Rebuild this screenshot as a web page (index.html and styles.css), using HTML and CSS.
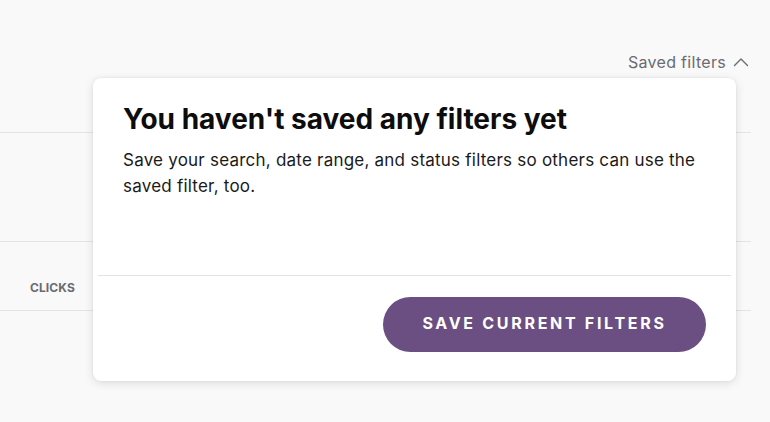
FILE: index.html
```html
<!DOCTYPE html>
<html>
<head>
<meta charset="utf-8">
<link rel="stylesheet" href="styles.css">
</head>
<body>
<div class="page">
  <div class="toolbar">
    <button class="saved-toggle">Saved filters
      <svg class="chevron" width="16" height="14" viewBox="0 0 16 14"><path d="M1.5 10.5 L8 4 L14.5 10.5" fill="none" stroke="#6b6b70" stroke-width="1.4" stroke-linecap="round" stroke-linejoin="round"/></svg>
    </button>
  </div>
  <div class="table">
    <div class="row row-b"></div>
    <div class="row row-head"><span class="col-head">CLICKS</span></div>
  </div>

  <div class="popover">
    <div class="popover-body">
      <h2 class="popover-title">You haven't saved any filters yet</h2>
      <p class="popover-text">Save your search, date range, and status filters so others can use the saved filter, too.</p>
    </div>
    <div class="popover-divider"></div>
    <div class="popover-footer">
      <button class="btn-primary">SAVE CURRENT FILTERS</button>
    </div>
  </div>
</div>
</body>
</html>
```

FILE: styles.css
```css
* { box-sizing: border-box; }
html, body { margin: 0; padding: 0; }
body {
  background: #f9f9f9;
  font-family: "Inter", "Lato", sans-serif;
  color: #111;
  width: 770px;
  height: 422px;
  overflow: hidden;
}
.page {
  position: relative;
  width: 770px;
  height: 422px;
}
.toolbar {
  width: 751px;
  height: 133px;
  display: flex;
  justify-content: flex-end;
  align-items: flex-start;
  padding-top: 50px;
  padding-right: 2px;
  border-bottom: 1px solid #e4e4e4;
}
.saved-toggle {
  background: none;
  border: none;
  padding: 0;
  font-family: inherit;
  font-size: 16px;
  letter-spacing: 0.3px;
  color: #6b6b70;
  display: flex;
  align-items: center;
  gap: 7px;
  line-height: 24px;
}
.table { width: 751px; }
.row { border-bottom: 1px solid #e4e4e4; }
.row-b { height: 109px; }
.row-head {
  height: 69px;
  display: flex;
  align-items: flex-end;
  padding-left: 30px;
  padding-bottom: 15px;
}
.col-head {
  font-size: 12px;
  font-weight: 700;
  color: #6b6b70;
  letter-spacing: 0.1px;
}
.popover {
  position: absolute;
  left: 93px;
  top: 78px;
  width: 643px;
  height: 303px;
  background: #fff;
  border-radius: 8px;
  box-shadow: 0 2px 10px rgba(0,0,0,0.12), 0 0 2px rgba(0,0,0,0.08);
  display: flex;
  flex-direction: column;
}
.popover-body {
  padding: 24px 30px 0 30px;
  flex: 1;
}
.popover-title {
  margin: 0;
  font-size: 28px;
  line-height: 34px;
  font-weight: 700;
  color: #0d0d0d;
  letter-spacing: 0;
}
.popover-text {
  margin: 11px 0 0 0;
  font-size: 17px;
  line-height: 26px;
  letter-spacing: 0.22px;
  color: #1a1a1a;
}
.popover-divider {
  height: 1px;
  background: #e2e2e2;
  margin: 0 5px;
}
.popover-footer {
  display: flex;
  justify-content: flex-end;
  padding: 21px 30px 29px 30px;
}
.btn-primary {
  height: 55px;
  width: 323px;
  border: none;
  border-radius: 28px;
  background: #6b4f82;
  color: #fff;
  font-family: inherit;
  font-size: 16px;
  font-weight: 700;
  letter-spacing: 2.7px;
  padding: 0 0 3px 0;
}
```
